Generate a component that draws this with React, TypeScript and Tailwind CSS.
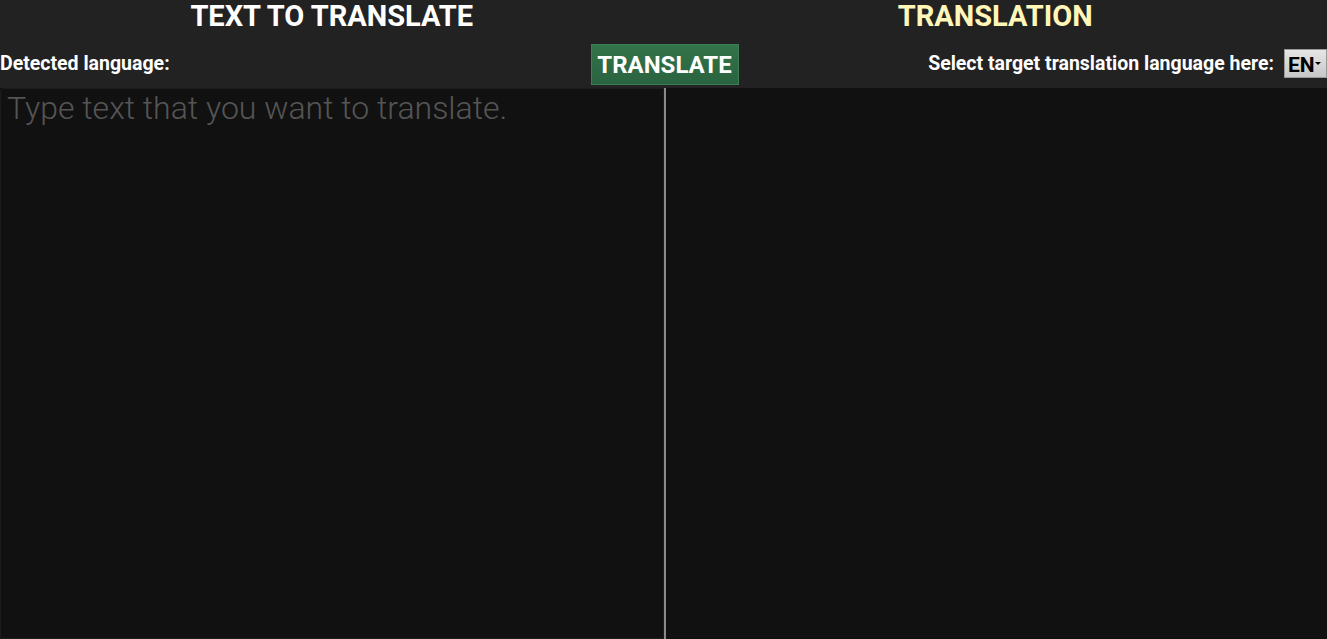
import { useState } from "react";

const font = { fontFamily: "Roboto, 'Liberation Sans', sans-serif" };

export default function App() {
  const [text, setText] = useState("");
  const [lang, setLang] = useState("EN");

  return (
    <div className="flex h-[639px] w-full flex-col bg-[#111111] text-white" style={font}>
      <header className="flex flex-col bg-[#222222]">
        <div className="flex h-[32px] items-center">
          <h1 className="flex-1 text-center text-[29px] font-bold leading-none">TEXT TO TRANSLATE</h1>
          <h1 className="flex-1 text-center text-[29px] font-bold leading-none text-[#fff6b8]">TRANSLATION</h1>
        </div>
        <div className="grid h-[56px] grid-cols-[1fr_auto_1fr] items-center pt-[7px]">
          <span className="text-[19.5px] font-bold">Detected language:</span>
          <button className="mt-[2px] ml-[2px] h-[41px] w-[148px] border border-[#3d7d54] bg-gradient-to-b from-[#33744a] to-[#2a6340] text-[24px] font-bold text-white">
            TRANSLATE
          </button>
          <div className="flex items-center justify-end gap-[10px]">
            <span className="text-[19.5px] font-bold">Select target translation language here:</span>
            <div className="relative h-[29px] w-[43px] border border-[#999] bg-gradient-to-b from-[#e6e6e6] to-[#c8c8c8]">
              <select
                value={lang}
                onChange={(e) => setLang(e.target.value)}
                className="h-full w-full appearance-none bg-transparent pl-[3px] text-[21px] font-bold text-black outline-none"
              >
                <option>EN</option>
                <option>DE</option>
                <option>FR</option>
              </select>
              <span className="pointer-events-none absolute right-[5px] top-[12px] border-x-[3px] border-t-[3px] border-x-transparent border-t-black" />
            </div>
          </div>
        </div>
      </header>
      <main className="grid flex-1 grid-cols-[664px_2px_1fr]">
        <textarea
          value={text}
          onChange={(e) => setText(e.target.value)}
          placeholder="Type text that you want to translate."
          className="min-w-0 resize-none rounded-tl-[4px] border border-[#1c1c1c] bg-[#111111] px-[6px] pt-0 text-[32px] leading-[38px] font-light text-white outline-none placeholder:text-[#555555]"
        />
        <div className="bg-[#8a8a8a]" />
        <div className="bg-[#111111]" />
      </main>
    </div>
  );
}
